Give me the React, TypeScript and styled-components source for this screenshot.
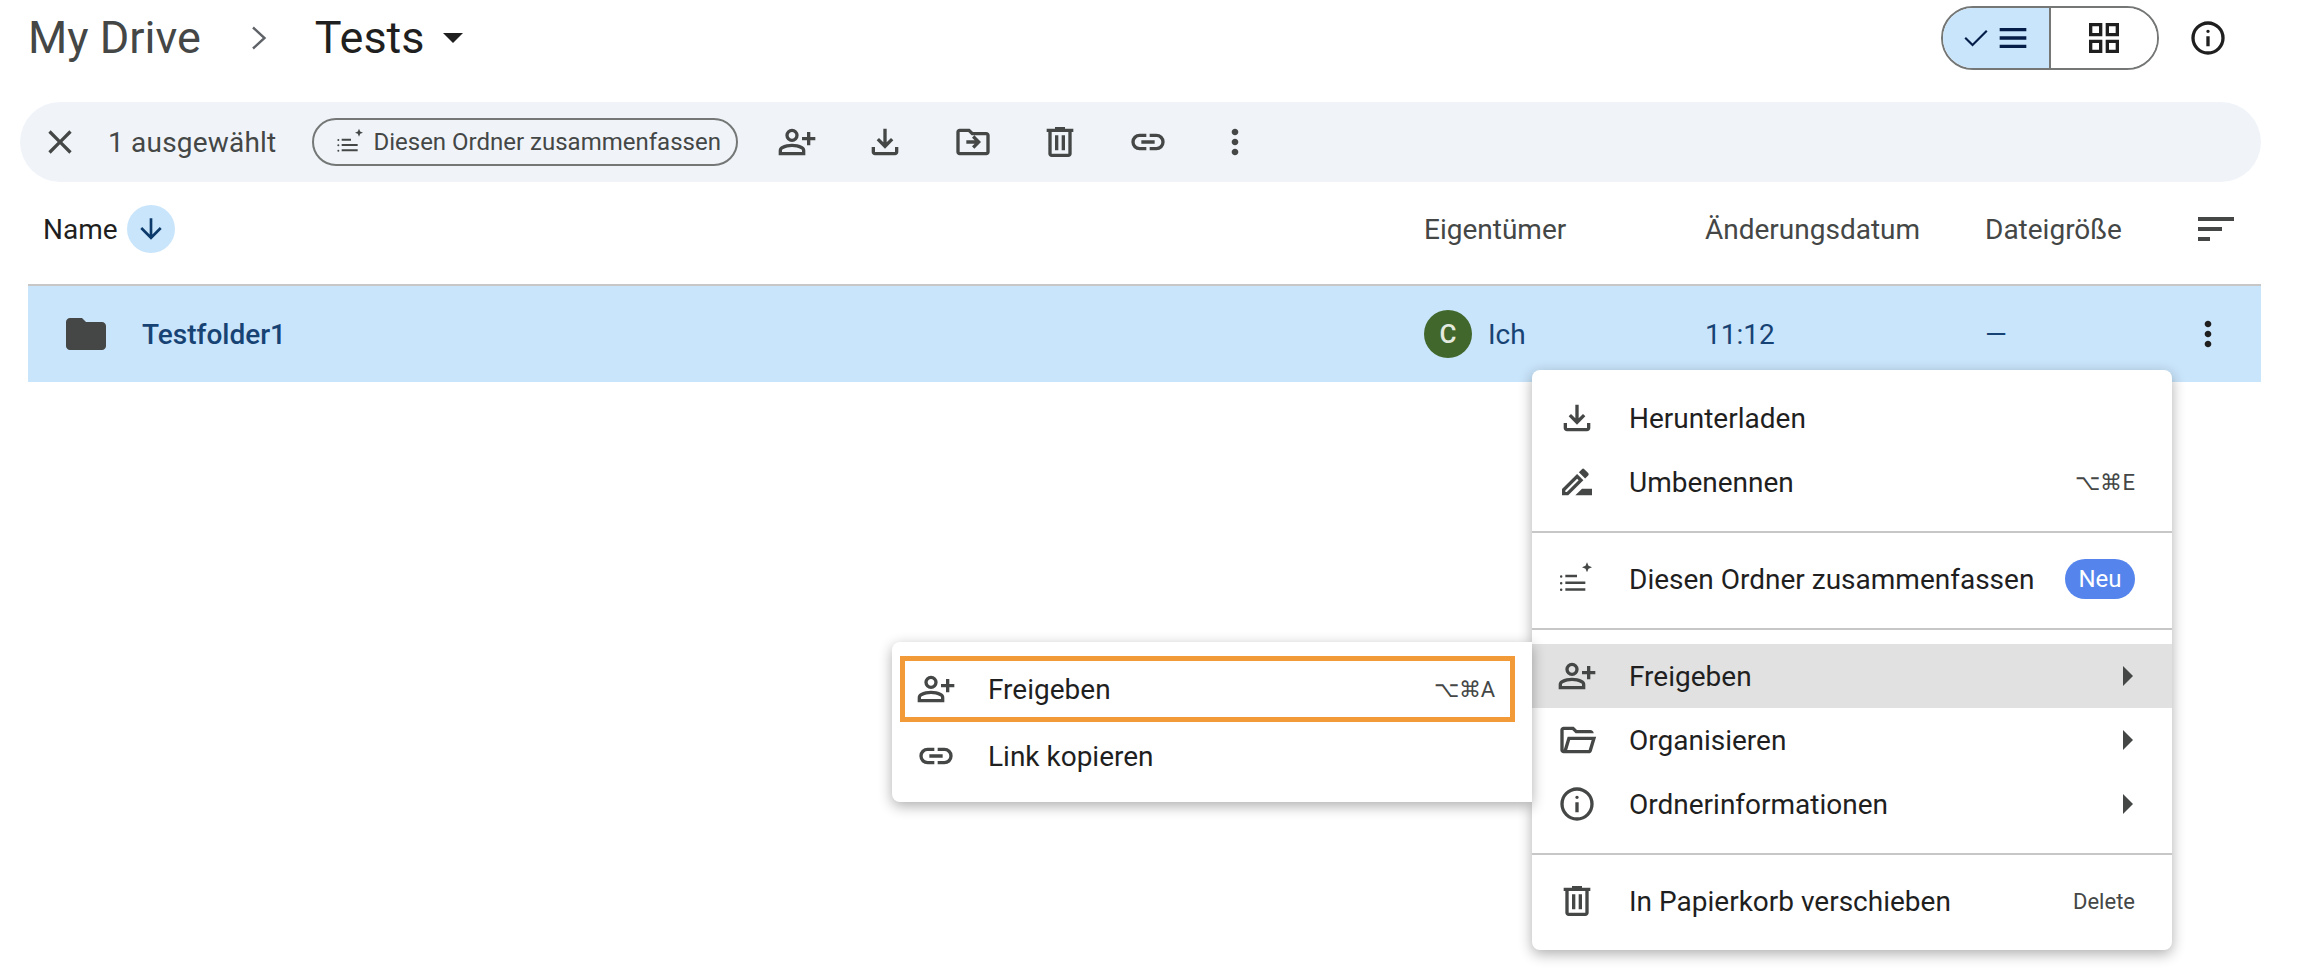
import React from "react";
import styled, { createGlobalStyle } from "styled-components";
import { MdOutlineDriveFileRenameOutline } from "react-icons/md";

const GlobalStyle = createGlobalStyle`
    html, body {
        margin: 0;
        padding: 0;
        background: #ffffff;
    }
    body {
        font-family: Roboto, "Open Sans", sans-serif;
        color: #1f1f1f;
    }
`;

const paths = {
    personAdd:
        "M720-400v-120H600v-80h120v-120h80v120h120v80H800v120h-80Zm-360-80q-66 0-113-47t-47-113q0-66 47-113t113-47q66 0 113 47t47 113q0 66-47 113t-113 47ZM40-160v-112q0-34 17.5-62.5T104-378q62-31 126-46.5T360-440q66 0 130 15.5T616-378q29 15 46.5 43.5T680-272v112H40Zm80-80h480v-32q0-11-5.5-20T580-306q-54-27-109-40.5T360-360q-56 0-111 13.5T140-306q-9 5-14.5 14t-5.5 20v32Zm240-320q33 0 56.5-23.5T440-640q0-33-23.5-56.5T360-720q-33 0-56.5 23.5T280-640q0 33 23.5 56.5T360-560Z",
    download:
        "M480-320 280-520l56-58 104 104v-326h80v326l104-104 56 58-200 200ZM240-160q-33 0-56.5-23.5T160-240v-120h80v120h480v-120h80v120q0 33-23.5 56.5T720-160H240Z",
    trash: "M280-120q-33 0-56.5-23.5T200-200v-520h-40v-80h200v-40h240v40h200v80h-40v520q0 33-23.5 56.5T680-120H280Zm400-600H280v520h400v-520ZM360-280h80v-360h-80v360Zm160 0h80v-360h-80v360Z",
    link: "M440-280H280q-83 0-141.5-58.5T80-480q0-83 58.5-141.5T280-680h160v80H280q-50 0-85 35t-35 85q0 50 35 85t85 35h160v80ZM320-440v-80h320v80H320Zm200 160v-80h160q50 0 85-35t35-85q0-50-35-85t-85-35H520v-80h160q83 0 141.5 58.5T880-480q0 83-58.5 141.5T680-280H520Z",
    more: "M480-160q-33 0-56.5-23.5T400-240q0-33 23.5-56.5T480-320q33 0 56.5 23.5T560-240q0 33-23.5 56.5T480-160Zm0-240q-33 0-56.5-23.5T400-480q0-33 23.5-56.5T480-560q33 0 56.5 23.5T560-480q0 33-23.5 56.5T480-400Zm0-240q-33 0-56.5-23.5T400-720q0-33 23.5-56.5T480-800q33 0 56.5 23.5T560-720q0 33-23.5 56.5T480-640Z",
    close: "m256-200-56-56 224-224-224-224 56-56 224 224 224-224 56 56-224 224 224 224-56 56-224-224-224 224Z",
    arrowDown:
        "M440-800v487L216-537l-56 57 320 320 320-320-56-57-224 224v-487h-80Z",
    folder: "M160-160q-33 0-56.5-23.5T80-240v-480q0-33 23.5-56.5T160-800h240l80 80h320q33 0 56.5 23.5T880-640v400q0 33-23.5 56.5T800-160H160Z",
    folderMove:
        "M160-160q-33 0-56.5-23.5T80-240v-480q0-33 23.5-56.5T160-800h240l80 80h320q33 0 56.5 23.5T880-640v400q0 33-23.5 56.5T800-160H160Zm0-80h640v-400H447l-80-80H160v480Zm360-200H320v-80h200l-64-64 56-56 160 160-160 160-56-56 64-64Z",
    folderOpen:
        "M160-160q-33 0-56.5-23.5T80-240v-480q0-33 23.5-56.5T160-800h240l80 80h320q33 0 56.5 23.5T880-640H447l-80-80H160v480l96-320h684L837-217q-8 26-29.5 41.5T760-160H160Zm84-80h516l72-240H316l-72 240Z",
    info: "M440-280h80v-240h-80v240Zm40-320q17 0 28.5-11.5T520-640q0-17-11.5-28.5T480-680q-17 0-28.5 11.5T440-640q0 17 11.5 28.5T480-600Zm0 520q-83 0-156-31.5T197-197q-54-54-85.5-127T80-480q0-83 31.5-156T197-763q54-54 127-85.5T480-880q83 0 156 31.5T763-763q54 54 85.5 127T880-480q0 83-31.5 156T763-197q-54 54-127 85.5T480-80Zm0-80q134 0 227-93t93-227q0-134-93-227t-227-93q-134 0-227 93t-93 227q0 134 93 227t227 93Z",
    grid: "M120-520v-320h320v320H120Zm0 400v-320h320v320H120Zm400-400v-320h320v320H520Zm0 400v-320h320v320H520ZM200-600h160v-160H200v160Zm400 0h160v-160H600v160Zm0 400h160v-160H600v160Zm-400 0h160v-160H200v160Z",
    check: "M382-240 154-468l43-43 185 185 381-381 43 43-424 424Z",
    menu: "M160-240v-80h640v80H160Zm0-200v-80h640v80H160Zm0-200v-80h640v80H160Z",
    sort: "M120-240v-80h240v80H120Zm0-200v-80h480v80H120Zm0-200v-80h720v80H120Z",
    summarize:
        "M200-200h480v-60H200v60Zm0-160h480v-60H200v60Zm0-160h280v-60H200v60ZM100-190a30 30 0 1 0 0-60 30 30 0 0 0 0 60Zm0-160a30 30 0 1 0 0-60 30 30 0 0 0 0 60Zm0-160a30 30 0 1 0 0-60 30 30 0 0 0 0 60Zm620-130-36-84-84-36 84-36 36-84 36 84 84 36-84 36-36 84Z",
};

type IconName = keyof typeof paths;

const Icon = ({ name, size = 40 }: { name: IconName; size?: number }) => (
    <svg
        width={size}
        height={size}
        viewBox="0 -960 960 960"
        fill="currentColor"
        style={{ display: "block", flexShrink: 0 }}
    >
        <path d={paths[name]} />
    </svg>
);

export default function App() {
    return (
        <Page>
            <GlobalStyle />
            <TitleBar>
                <Crumb>My Drive</Crumb>
                <ChevronMark viewBox="0 0 16 24" fill="none">
                    <path d="M2 1.5 13.5 12 2 22.5" stroke="#5f6368" strokeWidth="2.4" />
                </ChevronMark>
                <CurrentFolder>Tests</CurrentFolder>
                <Caret />
                <TitleRight>
                    <ViewToggle>
                        <ToggleSide $active>
                            <Icon name="check" size={34} />
                            <Icon name="menu" size={40} />
                        </ToggleSide>
                        <ToggleSide>
                            <Icon name="grid" size={40} />
                        </ToggleSide>
                    </ViewToggle>
                    <InfoButton>
                        <Icon name="info" size={40} />
                    </InfoButton>
                </TitleRight>
            </TitleBar>

            <Toolbar>
                <ToolIcon>
                    <Icon name="close" />
                </ToolIcon>
                <SelectedCount>1 ausgewählt</SelectedCount>
                <SummarizePill>
                    <Icon name="summarize" size={32} />
                    <span>Diesen Ordner zusammenfassen</span>
                </SummarizePill>
                <ToolGroup>
                    <ToolIcon>
                        <Icon name="personAdd" />
                    </ToolIcon>
                    <ToolIcon>
                        <Icon name="download" />
                    </ToolIcon>
                    <ToolIcon>
                        <Icon name="folderMove" />
                    </ToolIcon>
                    <ToolIcon>
                        <Icon name="trash" />
                    </ToolIcon>
                    <ToolIcon>
                        <Icon name="link" />
                    </ToolIcon>
                    <ToolIcon>
                        <Icon name="more" />
                    </ToolIcon>
                </ToolGroup>
            </Toolbar>

            <ListHeader>
                <NameHead>
                    <HeadName>Name</HeadName>
                    <SortBadge>
                        <Icon name="arrowDown" size={32} />
                    </SortBadge>
                </NameHead>
                <HeadCell>Eigentümer</HeadCell>
                <HeadCell>Änderungsdatum</HeadCell>
                <HeadCell>Dateigröße</HeadCell>
                <SortButton>
                    <Icon name="sort" size={48} />
                </SortButton>
            </ListHeader>

            <FileRow>
                <NameCell>
                    <FolderGlyph>
                        <Icon name="folder" size={48} />
                    </FolderGlyph>
                    <FileName>Testfolder1</FileName>
                </NameCell>
                <OwnerCell>
                    <Avatar>C</Avatar>
                    <RowText>Ich</RowText>
                </OwnerCell>
                <RowText>11:12</RowText>
                <RowText>—</RowText>
                <RowMore>
                    <Icon name="more" />
                </RowMore>
            </FileRow>

            <ContextMenu>
                <MenuSection $first>
                    <MenuRow>
                        <MenuIcon>
                            <Icon name="download" />
                        </MenuIcon>
                        <MenuLabel>Herunterladen</MenuLabel>
                    </MenuRow>
                    <MenuRow>
                        <MenuIcon>
                            <MdOutlineDriveFileRenameOutline size={40} />
                        </MenuIcon>
                        <MenuLabel>Umbenennen</MenuLabel>
                        <Shortcut>⌥⌘E</Shortcut>
                    </MenuRow>
                </MenuSection>
                <MenuSection>
                    <MenuRow>
                        <MenuIcon>
                            <Icon name="summarize" />
                        </MenuIcon>
                        <MenuLabel>Diesen Ordner zusammenfassen</MenuLabel>
                        <NewBadge>Neu</NewBadge>
                    </MenuRow>
                </MenuSection>
                <MenuSection>
                    <MenuRow $hover>
                        <MenuIcon>
                            <Icon name="personAdd" />
                        </MenuIcon>
                        <MenuLabel>Freigeben</MenuLabel>
                        <SubArrow />
                    </MenuRow>
                    <MenuRow>
                        <MenuIcon>
                            <Icon name="folderOpen" />
                        </MenuIcon>
                        <MenuLabel>Organisieren</MenuLabel>
                        <SubArrow />
                    </MenuRow>
                    <MenuRow>
                        <MenuIcon>
                            <Icon name="info" />
                        </MenuIcon>
                        <MenuLabel>Ordnerinformationen</MenuLabel>
                        <SubArrow />
                    </MenuRow>
                </MenuSection>
                <MenuSection>
                    <MenuRow>
                        <MenuIcon>
                            <Icon name="trash" />
                        </MenuIcon>
                        <MenuLabel>In Papierkorb verschieben</MenuLabel>
                        <Shortcut>Delete</Shortcut>
                    </MenuRow>
                </MenuSection>
            </ContextMenu>

            <ShareMenu>
                <ShareRow $marked>
                    <MenuIcon>
                        <Icon name="personAdd" />
                    </MenuIcon>
                    <MenuLabel>Freigeben</MenuLabel>
                    <Shortcut>⌥⌘A</Shortcut>
                </ShareRow>
                <ShareRow>
                    <MenuIcon>
                        <Icon name="link" />
                    </MenuIcon>
                    <MenuLabel>Link kopieren</MenuLabel>
                </ShareRow>
            </ShareMenu>
        </Page>
    );
}

const Page = styled.div`
    position: relative;
    width: 2302px;
    height: 970px;
    overflow: hidden;
    background: #ffffff;
`;

const TitleBar = styled.div`
    display: flex;
    align-items: center;
    height: 76px;
    padding: 0 74px 0 28px;
`;

const Crumb = styled.div`
    font-size: 45px;
    color: #444746;
    line-height: 76px;
`;

const ChevronMark = styled.svg`
    width: 16px;
    height: 24px;
    margin: 0 48px 0 50px;
`;

const CurrentFolder = styled.div`
    font-size: 45px;
    color: #1f1f1f;
    line-height: 76px;
`;

const Caret = styled.div`
    width: 0;
    height: 0;
    margin-left: 18px;
    border-left: 10px solid transparent;
    border-right: 10px solid transparent;
    border-top: 10px solid #1f1f1f;
`;

const TitleRight = styled.div`
    display: flex;
    align-items: center;
    margin-left: auto;
`;

const ViewToggle = styled.div`
    display: flex;
    width: 218px;
    height: 64px;
    box-sizing: border-box;
    border: 2px solid #747775;
    border-radius: 32px;
    overflow: hidden;
`;

const ToggleSide = styled.div<{ $active?: boolean }>`
    display: flex;
    align-items: center;
    justify-content: center;
    box-sizing: border-box;
    height: 100%;
    flex: ${({ $active }) => ($active ? "0 0 108px" : "1")};
    background: ${({ $active }) => ($active ? "#c9e5fb" : "#ffffff")};
    border-right: ${({ $active }) => ($active ? "2px solid #747775" : "none")};
    color: ${({ $active }) => ($active ? "#041e49" : "#1f1f1f")};
`;

const InfoButton = styled.div`
    display: flex;
    margin-left: 29px;
    color: #1f1f1f;
`;

const Toolbar = styled.div`
    display: flex;
    align-items: center;
    height: 80px;
    margin: 26px 41px 0 20px;
    padding-left: 20px;
    border-radius: 40px;
    background: #f0f4f9;
    color: #444746;
`;

const ToolIcon = styled.div`
    display: flex;
    width: 40px;
    height: 40px;
    color: #444746;
`;

const ToolGroup = styled.div`
    display: flex;
    gap: 47.6px;
    margin-left: 39px;
`;

const SelectedCount = styled.div`
    margin-left: 28px;
    font-size: 28px;
    letter-spacing: 0.2px;
    color: #444746;
`;

const SummarizePill = styled.div`
    display: flex;
    align-items: center;
    box-sizing: border-box;
    width: 426px;
    height: 48px;
    margin-left: 36px;
    padding-left: 21px;
    gap: 6px;
    border: 2px solid #747775;
    border-radius: 24px;
    font-size: 24px;
    color: #444746;
    white-space: nowrap;
`;

const listColumns = "1396px 281px 280px 1fr";

const ListHeader = styled.div`
    display: grid;
    grid-template-columns: ${listColumns} 70px;
    align-items: center;
    box-sizing: border-box;
    width: 2233px;
    height: 104px;
    margin-left: 28px;
    padding-bottom: 8px;
    border-bottom: 2px solid #c7c7c7;
`;

const NameHead = styled.div`
    display: flex;
    align-items: center;
    padding-left: 15px;
`;

const HeadName = styled.div`
    font-size: 28px;
    color: #1f1f1f;
`;

const SortBadge = styled.div`
    display: flex;
    align-items: center;
    justify-content: center;
    width: 48px;
    height: 48px;
    margin-left: 9px;
    border-radius: 50%;
    background: #c9e5fb;
    color: #0b3a6b;
`;

const HeadCell = styled.div`
    font-size: 28px;
    color: #444746;
    white-space: nowrap;
`;

const SortButton = styled.div`
    display: flex;
    justify-content: flex-end;
    padding-right: 21px;
    color: #444746;
`;

const FileRow = styled.div`
    display: grid;
    grid-template-columns: ${listColumns} 70px;
    align-items: center;
    width: 2233px;
    height: 96px;
    margin-left: 28px;
    background: #c9e5fb;
    color: #174374;
`;

const NameCell = styled.div`
    display: flex;
    align-items: center;
    padding-left: 34px;
`;

const FolderGlyph = styled.div`
    display: flex;
    color: #444746;
`;

const FileName = styled.div`
    margin-left: 32px;
    font-size: 28px;
    font-weight: 500;
    color: #174374;
`;

const OwnerCell = styled.div`
    display: flex;
    align-items: center;
    gap: 16px;
`;

const Avatar = styled.div`
    display: flex;
    align-items: center;
    justify-content: center;
    width: 48px;
    height: 48px;
    border-radius: 50%;
    background: #41672c;
    color: #e4eadf;
    font-size: 26px;
    font-weight: 500;
`;

const RowText = styled.div`
    font-size: 28px;
    color: #174374;
`;

const RowMore = styled.div`
    display: flex;
    justify-content: flex-end;
    padding-right: 33px;
    color: #1f1f1f;
`;

const floatingMenu = `
    position: absolute;
    left: 1532px;
    width: 640px;
    background: #ffffff;
    border-radius: 8px;
    box-shadow: 0 4px 14px rgba(0, 0, 0, 0.32);
`;

const ContextMenu = styled.div`
    ${floatingMenu}
    top: 370px;
    height: 580px;
    box-sizing: border-box;
    padding-top: 2px;
`;

const ShareMenu = styled.div`
    ${floatingMenu}
    left: 892px;
    top: 642px;
    height: 160px;
    box-sizing: border-box;
    padding: 14px 17px 0 8px;
    border-radius: 8px 0 0 8px;
`;

const MenuSection = styled.div<{ $first?: boolean }>`
    padding: 14px 0 17px;
    border-top: ${({ $first }) => ($first ? "none" : "2px solid #c7c7c7")};
`;

const MenuRow = styled.div<{ $hover?: boolean }>`
    display: flex;
    align-items: center;
    height: 64px;
    padding: 0 37px 0 25px;
    background: ${({ $hover }) => ($hover ? "#e1e1e1" : "transparent")};
`;

const ShareRow = styled.div<{ $marked?: boolean }>`
    display: flex;
    align-items: center;
    box-sizing: border-box;
    height: ${({ $marked }) => ($marked ? "66px" : "64px")};
    margin-bottom: 2px;
    padding: 0 15px 0 ${({ $marked }) => ($marked ? "11px" : "16px")};
    border: ${({ $marked }) => ($marked ? "5px solid #f39a38" : "none")};
`;

const MenuIcon = styled.div`
    display: flex;
    width: 40px;
    height: 40px;
    color: #444746;
`;

const MenuLabel = styled.div`
    margin-left: 32px;
    font-size: 28px;
    color: #1f1f1f;
    white-space: nowrap;
`;

const Shortcut = styled.div`
    margin-left: auto;
    font-size: 22px;
    color: #444746;
`;

const NewBadge = styled.div`
    display: flex;
    align-items: center;
    justify-content: center;
    width: 70px;
    height: 40px;
    margin-left: auto;
    border-radius: 20px;
    background: #5585ec;
    color: #ffffff;
    font-size: 24px;
`;

const SubArrow = styled.div`
    width: 0;
    height: 0;
    margin-left: auto;
    margin-right: 2px;
    border-top: 10px solid transparent;
    border-bottom: 10px solid transparent;
    border-left: 10px solid #444746;
`;
